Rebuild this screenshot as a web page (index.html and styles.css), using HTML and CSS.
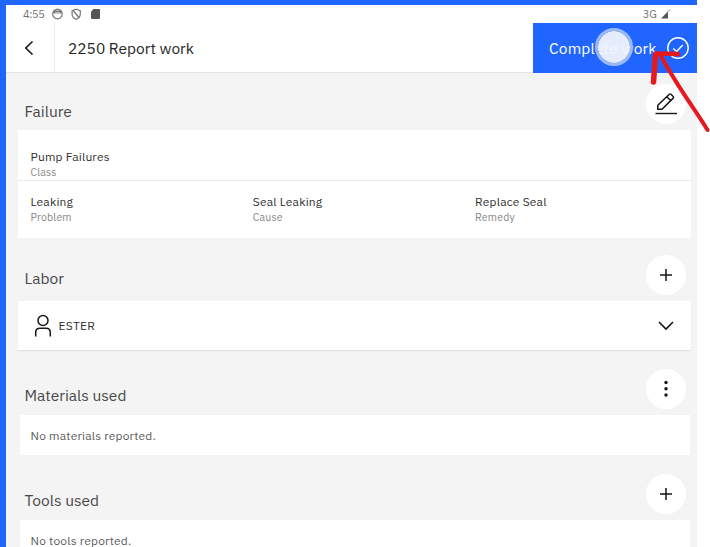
FILE: index.html
```html
<!DOCTYPE html>
<html lang="en">
<head>
<meta charset="utf-8">
<title>Report work</title>
<link rel="stylesheet" href="styles.css">
</head>
<body>
<div class="frame">
  <div class="app">
    <div class="status">
      <span class="time">4:55</span>
      <svg class="status-icons" width="80" height="14" viewBox="0 0 80 14">
        <circle cx="6.500" cy="7" r="4.800" fill="none" stroke="#737373" stroke-width="1.200"/>
        <path d="M2.500 3.500h8v3h-8z" fill="#737373"/><path d="M4 5.800h5" stroke="#ddd"/>
        <path d="M25.200 2.200l4.100 1.500v3.200c0 2.300-1.600 4.400-4.100 5.400-2.500-1-4.100-3.100-4.100-5.400V3.700z" fill="none" stroke="#777" stroke-width="1.200"/>
        <path d="M22.500 4l5.500 6.500" stroke="#777" fill="none" stroke-width="1.300"/>
        <path d="M42.500 2h5.500q1 0 1 1v8q0 1-1 1h-7q-1 0-1-1V4.800z" fill="#555"/>
      </svg>
      <span class="network">3G</span>
      <svg width="10" height="10" viewBox="0 0 10 10"><path d="M0 9.500L7 2.500V9.500z" fill="#555"/><path d="M7 2.500L9 .5" stroke="#777"/></svg>
    </div>
    <header class="header">
      <div class="back"><svg width="12" height="16" viewBox="0 0 12 16"><path d="M9.500 1.500L2.800 8l6.700 6.500" fill="none" stroke="#161616" stroke-width="1.600"/></svg></div>
      <h1 class="title">2250 Report work</h1>
      <div class="complete">
        <span class="complete-label">Complete work</span>
        <svg width="24" height="24" viewBox="0 0 24 24" fill="none" stroke="#fff" stroke-width="1.400"><circle cx="12" cy="12" r="10.200"/><path d="M7.300 12.400l3.200 3.100 6.300-6.500"/></svg>
        <span class="touch"></span>
      </div>
    </header>
    <main class="content">
      <section class="section failure">
        <div class="head"><h2 class="heading">Failure</h2>
          <div class="round"><svg width="24" height="24" viewBox="0 0 24 24" fill="none" stroke="#161616" stroke-width="1.500"><path d="M1.500 21.500h21.500" stroke-width="1.400"/><path d="M3.800 17.300v-4.100L15.300 2.300q.8-.7 1.600 0l2.300 2.200q.8.800 0 1.600L8 17.300zM12.800 4.800l4 3.900"/></svg></div></div>
        <div class="card">
          <div class="row class-row"><div class="field"><div class="value">Pump Failures</div><div class="label">Class</div></div></div>
          <div class="row detail-row">
            <div class="field"><div class="value">Leaking</div><div class="label">Problem</div></div>
            <div class="field"><div class="value">Seal Leaking</div><div class="label">Cause</div></div>
            <div class="field"><div class="value">Replace Seal</div><div class="label">Remedy</div></div>
          </div>
        </div>
      </section>
      <section class="section labor">
        <div class="head"><h2 class="heading">Labor</h2>
          <div class="round"><svg width="14" height="14" viewBox="0 0 14 14"><path d="M7 1v12M1 7h12" stroke="#161616" stroke-width="1.500"/></svg></div></div>
        <div class="card person">
          <svg width="18" height="24" viewBox="0 0 18 24" fill="none" stroke="#161616" stroke-width="1.500"><circle cx="9" cy="6.500" r="5"/><path d="M1.700 22.500v-4q0-4.200 4.300-4.200h6q4.300 0 4.300 4.200v4"/></svg>
          <span class="name">ESTER</span>
          <svg class="chevron" width="18" height="12" viewBox="0 0 18 12"><path d="M2 2l7 7 7-7" fill="none" stroke="#161616" stroke-width="1.600"/></svg>
        </div>
      </section>
      <section class="section">
        <div class="head"><h2 class="heading">Materials used</h2>
          <div class="round"><svg width="4" height="18" viewBox="0 0 4 18" fill="#161616"><circle cx="2" cy="2.500" r="1.700"/><circle cx="2" cy="8.700" r="1.700"/><circle cx="2" cy="15" r="1.700"/></svg></div></div>
        <div class="card empty"><span class="note">No materials reported.</span></div>
      </section>
      <section class="section">
        <div class="head"><h2 class="heading">Tools used</h2>
          <div class="round"><svg width="14" height="14" viewBox="0 0 14 14"><path d="M7 1v12M1 7h12" stroke="#161616" stroke-width="1.500"/></svg></div></div>
        <div class="card empty"><span class="note">No tools reported.</span></div>
      </section>
    </main>
  </div>
</div>
<svg class="arrow" width="70" height="100" viewBox="640 40 70 100" fill="none" stroke="#e5191e" stroke-linecap="round" stroke-linejoin="round"><path d="M707.500 130C694 108 677 86 661 56" stroke-width="4"/><path d="M653.500 82L655.500 55" stroke-width="5.500"/><path d="M655.500 53.500L678 54" stroke-width="4.500"/></svg>
</body>
</html>
```
FILE: styles.css
```css
* { box-sizing: border-box; }
body { margin: 0; width: 710px; height: 547px; overflow: hidden; background: #fff; font-family: "IBM Plex Sans", Roboto, "Liberation Sans", sans-serif; color: #262626; }
h1, h2 { margin: 0; font-weight: 400; }
svg { display: block; flex: none; }
.frame { width: 697px; height: 547px; padding: 5px 0 0 6px; background: #2065ff; overflow: hidden; }
.app { height: 542px; background: #f4f4f4; display: flex; flex-direction: column; }
.status { height: 18px; flex: none; background: #fff; display: flex; align-items: center; padding: 0 26px 0 17px; font-size: 11px; color: #737373; }
.time { width: 28px; letter-spacing: -.4px; }
.status-icons { margin-right: auto; }
.network { margin-right: 4px; }
.header { height: 50px; flex: none; display: flex; background: #fff; border-bottom: 1px solid #e4e4e4; }
.back { width: 49px; border-right: 1px solid #ececec; display: flex; align-items: center; padding-left: 17px; }
.title { flex: 1; padding-left: 13px; font-size: 15.5px; line-height: 50px; }
.complete { width: 164px; height: 50px; margin-bottom: -1px; background: #2065ff; color: #fff; display: flex; align-items: center; padding: 0 7px 0 16px; position: relative; }
.complete-label { flex: 1; font-size: 15.5px; white-space: nowrap; letter-spacing: .17px; }
.touch { position: absolute; left: 62px; top: 5px; width: 38px; height: 38px; border-radius: 50%; background: rgba(240, 243, 252, .95); border: 3px solid #9ab8f4; background-clip: padding-box; }
.content { flex: 1; min-height: 0; overflow: hidden; padding: 11px 6px 0 12px; }
.section { margin-bottom: 19px; }
.failure { margin-bottom: 17px; }
.head { display: flex; justify-content: space-between; height: 40px; margin-bottom: 6px; padding: 0 5px 0 6.5px; }
.heading { font-size: 15.5px; line-height: 40px; padding-top: 6px; color: #484848; white-space: nowrap; }
.failure .heading { padding-top: 7px; }
.labor .heading { padding-top: 3px; }
.round { width: 40px; height: 40px; border-radius: 50%; background: #fff; display: flex; align-items: center; justify-content: center; }
.card { background: #fff; color: #303030; }
.row { display: grid; grid-template-columns: repeat(3, 222.3px); padding-left: 12.5px; }
.class-row { height: 51px; padding-top: 19px; border-bottom: 1px solid #ebebeb; }
.detail-row { height: 57px; padding-top: 13px; }
.value { font-size: 12px; line-height: 16px; white-space: nowrap; letter-spacing: .18px; }
.label { font-size: 10.5px; line-height: 14px; color: #858585; white-space: nowrap; letter-spacing: .2px; }
.person { height: 49px; display: flex; align-items: center; padding: 0 16px; box-shadow: 0 1px 1px #e2e2e2; }
.name { margin-left: 6.500px; font-size: 12px; letter-spacing: .3px; }
.chevron { margin-left: auto; }
.empty { height: 40px; margin: 0 1px 0 2px; padding-left: 10.5px; line-height: 39px; }
.note { font-size: 12px; color: #5c5c5c; white-space: nowrap; letter-spacing: .18px; }
.arrow { position: absolute; left: 640px; top: 40px; }
```
